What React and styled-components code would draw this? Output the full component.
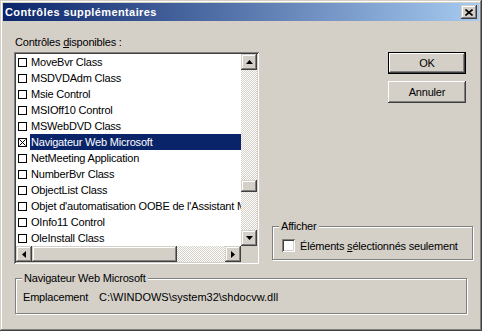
import React from "react";
import styled, { createGlobalStyle, css } from "styled-components";

const Global = createGlobalStyle`
  html, body { margin: 0; padding: 0; background: #d4d0c8; }
  body {
    font-family: "Liberation Sans", Arial, sans-serif;
    font-size: 11px;
    letter-spacing: -0.2px;
    color: #000;
  }
  * { box-sizing: border-box; }
`;

const raised = css`
  background: #d4d0c8;
  box-shadow: inset -1px -1px #404040, inset 1px 1px #d4d0c8,
    inset -2px -2px #808080, inset 2px 2px #fff;
`;

const dither = css`
  background-color: #d4d0c8;
  background-image: conic-gradient(#fff 25%, #d4d0c8 0 50%, #fff 0 75%, #d4d0c8 0);
  background-size: 2px 2px;
`;

const Window = styled.div`
  width: 482px;
  height: 331px;
  padding: 3px;
  display: flex;
  flex-direction: column;
  background: #d4d0c8;
  box-shadow: inset -1px -1px #404040, inset 1px 1px #d4d0c8,
    inset -2px -2px #808080, inset 2px 2px #fff;
`;

const TitleBar = styled.div`
  height: 18px;
  display: flex;
  align-items: center;
  justify-content: space-between;
  padding: 0 2px 0 2px;
  background: linear-gradient(to right, #0a246a, #a6caf0);
  color: #fff;
  font-weight: bold;
  font-size: 11px;
  letter-spacing: 0.4px;
`;

const CloseButton = styled.div`
  ${raised}
  width: 16px;
  height: 14px;
  display: flex;
  align-items: center;
  justify-content: center;
`;

const Body = styled.div`
  flex: 1;
  display: flex;
  flex-direction: column;
  padding: 15px 6px 0 11px;
`;

const TopRow = styled.div`
  display: flex;
`;

const LeftCol = styled.div`
  width: 245px;
  display: flex;
  flex-direction: column;
`;

const Label = styled.div`
  height: 13px;
  line-height: 13px;
  padding-left: 1px;
  margin-bottom: 3px;
`;

const ListFrame = styled.div`
  width: 245px;
  height: 212px;
  padding: 2px;
  display: grid;
  grid-template-columns: 1fr 16px;
  grid-template-rows: 1fr 16px;
  background: #fff;
  box-shadow: inset 1px 1px #808080, inset -1px -1px #fff,
    inset 2px 2px #404040, inset -2px -2px #d4d0c8;
`;

const Items = styled.div`
  overflow: hidden;
  background: #fff;
`;

const Row = styled.div`
  height: 16px;
  display: flex;
  align-items: center;
  padding-left: 2px;
  white-space: nowrap;
`;

const SmallBox = styled.span`
  width: 9px;
  height: 9px;
  border: 1px solid #000;
  margin-right: 3px;
  flex: none;
  display: flex;
  align-items: center;
  justify-content: center;
`;

const ItemText = styled.span`
  flex: 1;
  line-height: 16px;
  padding: 0 1px;
  overflow: hidden;
  background: ${(p) => (p.$selected ? "#0a246a" : "transparent")};
  color: ${(p) => (p.$selected ? "#fff" : "#000")};
`;

const VScroll = styled.div`
  display: flex;
  flex-direction: column;
`;

const HScroll = styled.div`
  display: flex;
`;

const ArrowBtn = styled.div`
  ${raised}
  width: 16px;
  height: 16px;
  flex: none;
  display: flex;
  align-items: center;
  justify-content: center;
`;

const VTrack = styled.div`
  ${dither}
  flex: 1;
`;

const HTrack = styled.div`
  ${dither}
  flex: 1;
  display: flex;
`;

const VThumb = styled.div`
  ${raised}
  height: 12px;
  margin-top: 110px;
`;

const HThumb = styled.div`
  ${raised}
  width: 145px;
  height: 16px;
`;

const Corner = styled.div`
  background: #d4d0c8;
`;

const RightCol = styled.div`
  flex: 1;
  display: flex;
  flex-direction: column;
  align-items: flex-end;
`;

const Buttons = styled.div`
  display: flex;
  flex-direction: column;
  gap: 7px;
  margin: 16px 7px 0 0;
`;

const Button = styled.div`
  width: 78px;
  height: 22px;
  display: flex;
  align-items: center;
  justify-content: center;
  background: #d4d0c8;
  box-shadow: ${(p) =>
    p.$default
      ? "inset 0 0 0 1px #000, inset -2px -2px #404040, inset 2px 2px #fff, inset -3px -3px #808080"
      : "inset -1px -1px #404040, inset 1px 1px #fff, inset -2px -2px #808080, inset 2px 2px #d4d0c8"};
`;

const Group = styled.fieldset`
  margin: 0;
  padding: 0;
  border: 1px solid #808080;
  box-shadow: inset 1px 1px 0 #fff, 1px 1px 0 #fff;
  min-width: 0;
`;

const Legend = styled.legend`
  margin-left: 6px;
  padding: 0 2px;
  line-height: 13px;
  background: #d4d0c8;
`;

const ShowGroup = styled(Group)`
  width: 201px;
  margin-top: auto;
  margin-bottom: 4px;
`;

const InfoGroup = styled(Group)`
  width: 452px;
  margin: 8px 0 0 1px;
`;

const CheckRow = styled.div`
  height: 13px;
  display: flex;
  align-items: center;
  gap: 5px;
  margin: 6px 0 7px 9px;
`;

const CheckBox = styled.span`
  width: 13px;
  height: 13px;
  background: #fff;
  box-shadow: inset 1px 1px #808080, inset -1px -1px #fff,
    inset 2px 2px #404040, inset -2px -2px #d4d0c8;
`;

const InfoRow = styled.div`
  display: flex;
  line-height: 13px;
  padding: 6px 0 9px 7px;
`;

const InfoKey = styled.span`
  width: 76px;
`;

const InfoValue = styled.span`
  letter-spacing: 0;
`;

const Up = () => (
  <svg width="7" height="4" viewBox="0 0 7 4"><path d="M3.5 0 L7 4 L0 4 Z" fill="#000" /></svg>
);
const Down = () => (
  <svg width="7" height="4" viewBox="0 0 7 4"><path d="M0 0 L7 0 L3.5 4 Z" fill="#000" /></svg>
);
const Left = () => (
  <svg width="4" height="7" viewBox="0 0 4 7"><path d="M4 0 L4 7 L0 3.5 Z" fill="#000" /></svg>
);
const Right = () => (
  <svg width="4" height="7" viewBox="0 0 4 7"><path d="M0 0 L4 3.5 L0 7 Z" fill="#000" /></svg>
);

const items = [
  "MoveBvr Class",
  "MSDVDAdm Class",
  "Msie Control",
  "MSIOff10 Control",
  "MSWebDVD Class",
  "Navigateur Web Microsoft",
  "NetMeeting Application",
  "NumberBvr Class",
  "ObjectList Class",
  "Objet d'automatisation OOBE de l'Assistant Migration",
  "OInfo11 Control",
  "OleInstall Class",
];

const App = () => {
  return (
    <>
      <Global />
      <Window>
        <TitleBar>
          <span>Contrôles supplémentaires</span>
          <CloseButton>
            <svg width="8" height="7" viewBox="0 0 8 7">
              <path d="M0.5 0.5 L7.5 6.5 M7.5 0.5 L0.5 6.5" stroke="#000" strokeWidth="1.6" />
            </svg>
          </CloseButton>
        </TitleBar>
        <Body>
          <TopRow>
            <LeftCol>
              <Label>
                Contrôles <u>d</u>isponibles :
              </Label>
              <ListFrame>
                <Items>
                  {items.map((name, i) => {
                    const sel = name === "Navigateur Web Microsoft";
                    return (
                      <Row key={i}>
                        <SmallBox>
                          {sel && (
                            <svg width="7" height="7" viewBox="0 0 7 7">
                              <path d="M0.5 0.5 L6.5 6.5 M6.5 0.5 L0.5 6.5" stroke="#000" strokeWidth="1" />
                            </svg>
                          )}
                        </SmallBox>
                        <ItemText $selected={sel}>{name}</ItemText>
                      </Row>
                    );
                  })}
                </Items>
                <VScroll>
                  <ArrowBtn><Up /></ArrowBtn>
                  <VTrack><VThumb /></VTrack>
                  <ArrowBtn><Down /></ArrowBtn>
                </VScroll>
                <HScroll>
                  <ArrowBtn><Left /></ArrowBtn>
                  <HTrack><HThumb /></HTrack>
                  <ArrowBtn><Right /></ArrowBtn>
                </HScroll>
                <Corner />
              </ListFrame>
            </LeftCol>
            <RightCol>
              <Buttons>
                <Button $default>OK</Button>
                <Button>Annuler</Button>
              </Buttons>
              <ShowGroup>
                <Legend>Afficher</Legend>
                <CheckRow>
                  <CheckBox />
                  <span>
                    Éléments <u>s</u>électionnés seulement
                  </span>
                </CheckRow>
              </ShowGroup>
            </RightCol>
          </TopRow>
          <InfoGroup>
            <Legend>Navigateur Web Microsoft</Legend>
            <InfoRow>
              <InfoKey>Emplacement</InfoKey>
              <InfoValue>{"C:\\WINDOWS\\system32\\shdocvw.dll"}</InfoValue>
            </InfoRow>
          </InfoGroup>
        </Body>
      </Window>
    </>
  );
};

export default App;
